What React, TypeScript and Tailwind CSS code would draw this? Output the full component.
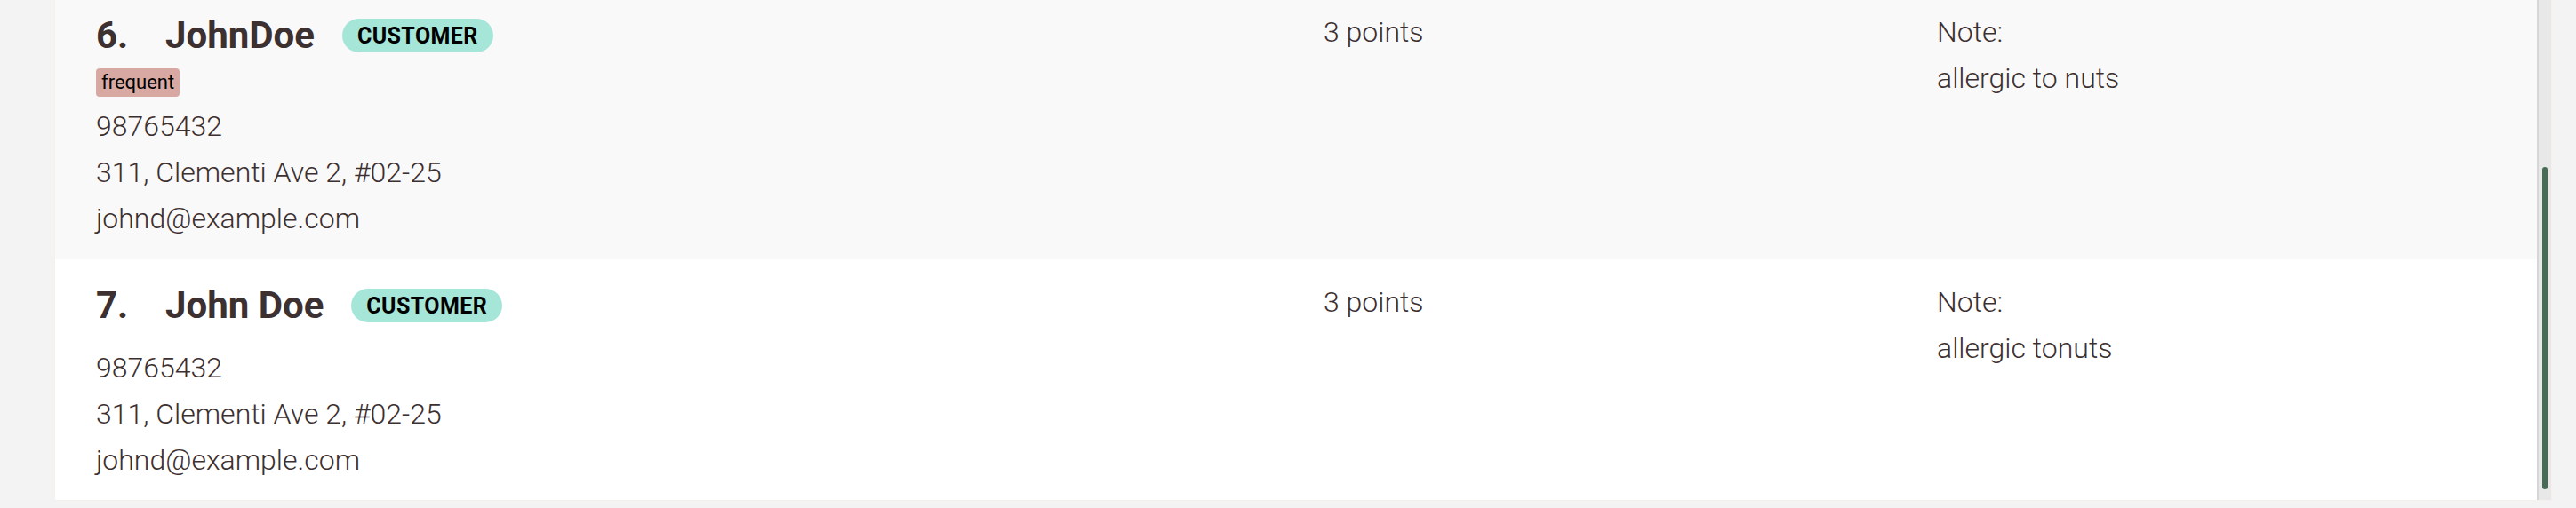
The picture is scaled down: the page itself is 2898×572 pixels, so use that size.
import React from "react";

type Person = {
  idx: string;
  name: string;
  tags: string[];
  phone: string;
  address: string;
  email: string;
  points: string;
  note: string;
  bg: string;
};

const people: Person[] = [
  {
    idx: "6.",
    name: "JohnDoe",
    tags: ["frequent"],
    phone: "98765432",
    address: "311, Clementi Ave 2, #02-25",
    email: "johnd@example.com",
    points: "3 points",
    note: "allergic to nuts",
    bg: "bg-[#f9f9f9]",
  },
  {
    idx: "7.",
    name: "John Doe",
    tags: [],
    phone: "98765432",
    address: "311, Clementi Ave 2, #02-25",
    email: "johnd@example.com",
    points: "3 points",
    note: "allergic tonuts",
    bg: "bg-white",
  },
];

function Row({ p }: { p: Person }) {
  return (
    <div className={`flex pl-[46px] pb-[20px] ${p.bg}`}>
      <div className="w-[1381px] flex flex-col">
        <div className="mt-[33px] h-[38px] flex items-center">
          <span className="w-[78px] text-[42px] leading-none font-bold text-[#3d3030]">{p.idx}</span>
          <span className="text-[42px] leading-none font-bold text-[#3d3030]">{p.name}</span>
          <span className="ml-[31px] h-[38px] px-[17px] rounded-full bg-[#a5e6d8] flex items-center text-[25px] tracking-[0.4px] font-bold text-black leading-none">
            CUSTOMER
          </span>
        </div>
        {p.tags.length > 0 ? (
          <div className="mt-[18px] flex gap-2">
            {p.tags.map((t) => (
              <span
                key={t}
                className="h-[32px] px-[6px] rounded-[4px] bg-[#d8a9a3] flex items-center text-[22px] leading-none text-black"
              >
                {t}
              </span>
            ))}
          </div>
        ) : null}
        <div
          className={`${p.tags.length > 0 ? "mt-[7px]" : "mt-[25px]"} flex flex-col text-[32px] leading-[52px] font-light text-[#3d3030]`}
        >
          <span>{p.phone}</span>
          <span>{p.address}</span>
          <span>{p.email}</span>
        </div>
      </div>
      <div className="w-[690px] pt-[22px] text-[32px] leading-[52px] font-light text-[#3d3030]">
        {p.points}
      </div>
      <div className="flex-1 pt-[22px] flex flex-col text-[32px] leading-[52px] font-light text-[#3d3030]">
        <span>Note:</span>
        <span>{p.note}</span>
      </div>
    </div>
  );
}

export default function App() {
  return (
    <div
      className="w-[2898px] h-[572px] bg-[#f3f3f3] flex overflow-hidden"
      style={{ fontFamily: "Roboto, 'Noto Sans', sans-serif" }}
    >
      <div className="w-[61px] shrink-0" />
      <div className="h-[564px] flex border-l border-r border-b border-[#f7efe9] shrink-0">
        <div className="w-[2792px] h-[563px] overflow-hidden bg-[#f3f3f3]">
          <div className="-mt-[12px] flex flex-col">
            {people.map((p) => (
              <Row key={p.idx} p={p} />
            ))}
          </div>
        </div>
        <div className="w-[16px] h-[563px] bg-[#e8e8e8] border-l-2 border-[#d6d6d6] flex justify-center pt-[188px] pb-[12px]">
          <div className="w-[6px] h-full rounded-full bg-[#486b55]" />
        </div>
      </div>
    </div>
  );
}
